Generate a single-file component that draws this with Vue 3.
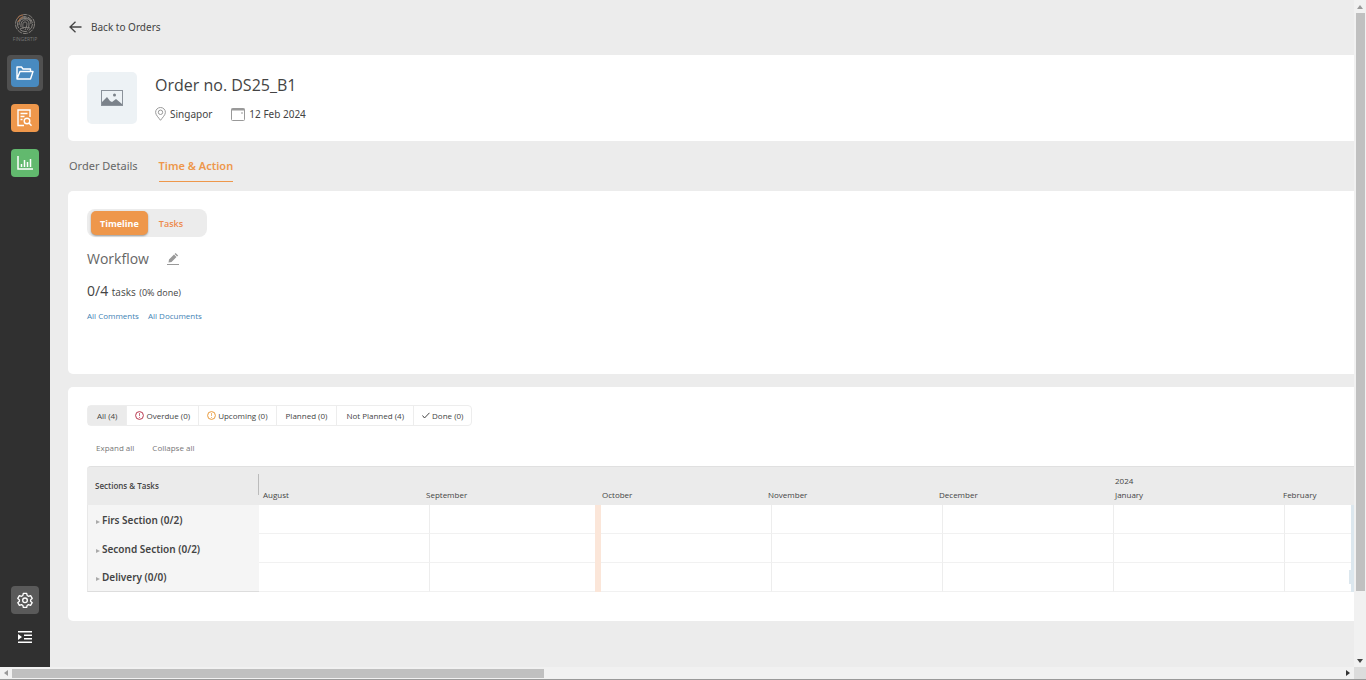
<script setup>
import { ref } from 'vue'

const view = ref('timeline')
const filter = ref('all')

const filters = [
  { id: 'all', label: 'All (4)' },
  { id: 'overdue', label: 'Overdue (0)', icon: 'alert' },
  { id: 'upcoming', label: 'Upcoming (0)', icon: 'alert' },
  { id: 'planned', label: 'Planned (0)' },
  { id: 'unplanned', label: 'Not Planned (4)' },
  { id: 'done', label: 'Done (0)', icon: 'check' },
]

const months = [
  { name: 'August' },
  { name: 'September' },
  { name: 'October' },
  { name: 'November' },
  { name: 'December' },
  { name: 'January', year: '2024' },
  { name: 'February' },
]

const sections = ['Firs Section (0/2)', 'Second Section (0/2)', 'Delivery (0/0)']
</script>

<template>
  <div class="window">
    <div class="app">
      <nav class="sidebar" aria-label="Main">
        <div class="brand">
          <svg width="22" height="22" viewBox="0 0 22 22" fill="none" stroke="#85817d" stroke-width="1">
            <circle cx="11" cy="11" r="9.5" stroke-dasharray="5 1" />
            <circle cx="11" cy="11" r="7.5" stroke-dasharray="8 1.5" />
            <path d="M5 12c0-9 12-8 12-1M7 14c-1-9 8-9 8-3 0 3-1 5-2 6M9 16c0-3-1-7 2-7s2 4 0 8M5 8c4-5 9-4 12 0M6 16c3-2 7-2 10-1" />
            <path d="M3 6c1-2 3-4 6-4M4 9c1-3 3-4 5-5" stroke="#a56a43" />
          </svg>
          <span class="brand-name">FINGERTIP</span>
        </div>
        <a href="#orders" class="nav-item active" aria-label="Orders">
          <span class="tile blue">
            <svg width="18" height="14" viewBox="0 0 18 14" fill="none" stroke="#fff" stroke-width="1.4" stroke-linejoin="round">
              <path d="M1 13V1h4.5l1.5 2h7.500v2.500M1 13L4 5.500h13L14.500 13z" />
            </svg>
          </span>
        </a>
        <a href="#search" class="nav-item" aria-label="Search">
          <span class="tile orange">
            <svg width="16" height="18" viewBox="0 0 16 18" fill="none" stroke="#fff" stroke-width="1.400">
              <path d="M7 16.500H1V1h12v7M3.500 4.500h7M3.500 7.500h4M3.500 10.500h2" />
              <circle cx="10" cy="12" r="2.800" />
              <path d="M12 14l2.500 2.800" />
            </svg>
          </span>
        </a>
        <a href="#reports" class="nav-item" aria-label="Reports">
          <span class="tile green">
            <svg width="16" height="14" viewBox="0 0 16 14" fill="none" stroke="#fff" stroke-width="1.500">
              <path d="M1 0v13h15M4.500 11V8M7.500 11V4M10.500 11V6M13.500 11V3" />
            </svg>
          </span>
        </a>
        <div class="nav-end">
          <a href="#settings" class="nav-item" aria-label="Settings">
            <span class="tile gray">
              <svg width="16" height="16" viewBox="0 0 24 24" fill="none" stroke="#fff" stroke-width="2" stroke-linejoin="round">
                <path d="M9.500 2h5l.7 3.200 2 1.200 3.200-1 2.400 4.200-2.400 2.200v2l2.400 2.200-2.400 4-3.200-1-2 1.200-.7 3h-5l-.7-3-2-1.200-3.200 1-2.400-4 2.400-2.200v-2L1.200 9.600l2.400-4.200 3.200 1 2-1.200z" />
                <circle cx="12" cy="12.500" r="3.500" />
              </svg>
            </span>
          </a>
          <button class="expand" type="button" aria-label="Expand menu">
            <svg width="14" height="12" viewBox="0 0 14 12" fill="#fff">
              <path d="M0 0h14v1.500H0zM6 3.500h8V5H6zM6 7h8v1.500H6zM0 10.500h14V12H0zM0 3l4 3-4 3z" />
            </svg>
          </button>
        </div>
      </nav>

      <main class="content">
        <a href="#orders" class="back">
          <svg width="13" height="12" viewBox="0 0 13 12" fill="none" stroke="#444" stroke-width="1.300">
            <path d="M12.500 6H1M6.500 .7L1 6l5.500 5.300" />
          </svg>
          Back to Orders
        </a>

        <section class="card order">
          <div class="thumb">
            <svg width="22" height="16" viewBox="0 0 22 16">
              <rect x=".5" y=".5" width="21" height="15" fill="none" stroke="#8b929a" />
              <path d="M1 15v-3l5-5 3 4 2 1 4-3 6 5v1z" fill="#7b828a" />
              <circle cx="13.500" cy="5" r="1.500" fill="#7b828a" />
            </svg>
          </div>
          <div class="order-info">
            <h1>Order no. DS25_B1</h1>
            <div class="meta">
              <span class="meta-item">
                <svg width="11" height="14" viewBox="0 0 11 14" fill="none" stroke="#999">
                  <path d="M5.500 13.300C3.500 10.500.6 8 .6 5.300a4.900 4.800 0 0 1 9.800 0C10.400 8 7.500 10.500 5.500 13.300z" />
                  <circle cx="5.500" cy="5.300" r="2.200" />
                </svg>
                Singapor
              </span>
              <span class="meta-item">
                <svg width="14" height="13" viewBox="0 0 14 13" fill="none" stroke="#999">
                  <rect x=".5" y=".5" width="13" height="12" rx="1" />
                  <path d="M.5 1.500h13" stroke-width="2" />
                  <path d="M10 5h2" />
                </svg>
                12 Feb 2024
              </span>
            </div>
          </div>
        </section>

        <nav class="tabs" aria-label="Order">
          <a href="#details" class="tab">Order Details</a>
          <a href="#time" class="tab current">Time &amp; Action</a>
        </nav>

        <section class="card workflow">
          <div class="switch">
            <button type="button" :class="{ on: view === 'timeline' }" @click="view = 'timeline'">Timeline</button>
            <button type="button" :class="{ on: view === 'tasks' }" @click="view = 'tasks'">Tasks</button>
          </div>
          <div class="workflow-head">
            <h2>Workflow</h2>
            <button class="edit" type="button" aria-label="Edit workflow">
              <svg width="12" height="12" viewBox="0 0 12 12" fill="#999">
                <path d="M1.500 9.500L2 6.500l5-5 2.500 2.500-5 5zM7.600 1L8.600 0l2.500 2.500-1 1zM0 11h12v1H0z" />
              </svg>
            </button>
          </div>
          <p class="progress"><strong>0/4</strong> <span>tasks</span> <small>(0% done)</small></p>
          <div class="links">
            <a href="#comments">All Comments</a>
            <a href="#documents">All Documents</a>
          </div>
        </section>

        <section class="card schedule">
          <div class="filters">
            <button
              v-for="f in filters"
              :key="f.id"
              type="button"
              :class="[f.id, { selected: filter === f.id }]"
              @click="filter = f.id"
            >
              <svg v-if="f.icon === 'alert'" width="9" height="9" viewBox="0 0 9 9" fill="none" stroke="currentColor">
                <circle cx="4.500" cy="4.500" r="3.900" />
                <path d="M4.500 2v3M4.500 6v1" stroke-opacity=".7" />
              </svg>
              <svg v-if="f.icon === 'check'" width="8" height="7" viewBox="0 0 8 7" fill="none" stroke="currentColor">
                <path d="M.5 3.500l2 2.500L7.500 .8" />
              </svg>
              <span>{{ f.label }}</span>
            </button>
          </div>

          <div class="tree-actions">
            <button type="button">Expand all</button>
            <button type="button">Collapse all</button>
          </div>

          <div class="gantt">
            <table>
              <colgroup>
                <col class="col-name" />
                <col v-for="n in 6" :key="n" class="col-month" />
                <col />
              </colgroup>
              <thead>
                <tr>
                  <th class="head-name" scope="col">Sections &amp; Tasks</th>
                  <th class="head-months" colspan="7">
                    <div class="months">
                      <span v-for="m in months" :key="m.name" class="month">
                        <span v-if="m.year">{{ m.year }}</span>
                        <span>{{ m.name }}</span>
                      </span>
                    </div>
                  </th>
                </tr>
              </thead>
              <tbody>
                <tr v-for="s in sections" :key="s">
                  <th scope="row">
                    <button type="button" class="row-toggle">
                      <svg width="4" height="4" viewBox="0 0 4 4" fill="#aaa"><path d="M0 0l4 2-4 2z" /></svg>
                      {{ s }}
                    </button>
                  </th>
                  <td v-for="m in months" :key="m.name"></td>
                </tr>
              </tbody>
            </table>
            <div class="marker today"></div>
            <div class="marker due"></div>
            <div class="marker delivery"></div>
          </div>
        </section>
      </main>
    </div>

    <div class="scroll vertical">
      <svg width="6" height="4" viewBox="0 0 6 4" fill="#999"><path d="M0 4l3-4 3 4z" /></svg>
      <div class="track"><div class="bar"></div></div>
      <svg width="6" height="4" viewBox="0 0 6 4" fill="#444"><path d="M0 0l3 4 3-4z" /></svg>
    </div>
    <div class="scroll horizontal">
      <svg width="4" height="6" viewBox="0 0 4 6" fill="#999"><path d="M4 0L0 3l4 3z" /></svg>
      <div class="track"><div class="bar"></div></div>
      <svg width="4" height="6" viewBox="0 0 4 6" fill="#333"><path d="M0 0l4 3-4 3z" /></svg>
    </div>
    <div class="corner"></div>
  </div>
</template>

<style>
body {
  background: #ececec;
  overflow: hidden;
}
</style>

<style scoped>
* {
  box-sizing: border-box;
}
.window {
  display: grid;
  grid-template: minmax(0, 1fr) 13px / minmax(0, 1fr) 12px;
  height: 100vh;
  font-family: "Open Sans", "Noto Sans", sans-serif;
  font-size: 10px;
  color: #444;
}
svg {
  display: block;
  flex: none;
}
a {
  color: inherit;
  text-decoration: none;
}
button {
  font: inherit;
  color: inherit;
  background: none;
  border: 0;
  padding: 0;
}
h1,
h2,
p {
  margin: 0;
  font-weight: 400;
}
.app {
  display: flex;
  background: #ececec;
  overflow: hidden;
}

.sidebar {
  flex: none;
  display: flex;
  flex-direction: column;
  align-items: center;
  gap: 9px;
  width: 50px;
  padding: 13px 0 19px;
  background: #303030;
}
.brand {
  display: flex;
  flex-direction: column;
  align-items: center;
  height: 33px;
}
.brand-name {
  margin-top: 2px;
  font-size: 5px;
  line-height: 5px;
  color: #777;
}
.nav-item {
  display: flex;
  padding: 4px;
  border-radius: 4px;
}
.nav-item.active {
  background: #505050;
}
.tile {
  display: flex;
  align-items: center;
  justify-content: center;
  width: 28px;
  height: 28px;
  border-radius: 4px;
}
.blue { background: #488ac0; }
.orange { background: #ee974b; }
.green { background: #62b96e; }
.gray { background: #5a5a5a; }
.nav-end {
  display: flex;
  flex-direction: column;
  align-items: center;
  gap: 8px;
  margin-top: auto;
}
.expand {
  display: flex;
  padding: 5px;
}

.content {
  flex: 1;
  min-width: 0;
  padding: 19px 0 0 18px;
}
.back,
.meta,
.tabs,
.row-toggle {
  font-family: "Noto Sans", "Open Sans", sans-serif;
}
.back {
  display: flex;
  align-items: center;
  gap: 9px;
  width: fit-content;
  height: 16px;
  padding-left: 1px;
}
.card {
  background: #fff;
  border-radius: 5px 0 0 5px;
  padding-left: 19px;
}
.order {
  display: flex;
  gap: 18px;
  margin-top: 20px;
  padding-top: 17px;
  padding-bottom: 17px;
}
.thumb {
  display: flex;
  align-items: center;
  justify-content: center;
  width: 50px;
  height: 52px;
  border-radius: 5px;
  background: #edf2f5;
}
h1 {
  font-size: 16px;
  line-height: 26px;
}
.meta {
  display: flex;
  gap: 19px;
  margin-top: 8px;
}
.meta-item {
  display: flex;
  align-items: center;
  gap: 4px;
  line-height: 16px;
}
.tabs {
  display: flex;
  gap: 21px;
  height: 41px;
  margin-bottom: 9px;
  padding-left: 1px;
  font-size: 11px;
  color: #666;
}
.tab {
  padding-top: 17px;
  line-height: 16px;
}
.tab.current {
  font-weight: 600;
  color: #ee974b;
  border-bottom: 1px solid #ee974b;
}

.workflow {
  height: 183px;
  padding-top: 18px;
}
.switch {
  display: flex;
  align-items: center;
  width: 120px;
  height: 28px;
  padding: 0 4px;
  border-radius: 8px;
  background: #ececec;
  font-size: 9px;
  font-weight: 600;
  color: #ee8a4b;
}
.switch button {
  height: 24px;
  padding: 0 11px;
}
.switch .on {
  padding: 0 9px;
  border-radius: 5px;
  background: #ee974b;
  color: #fff;
  font-weight: 700;
  box-shadow: 0 1px 2px rgba(0, 0, 0, 0.35);
}
.workflow-head {
  display: flex;
  align-items: center;
  gap: 18px;
  margin-top: 12px;
}
h2 {
  font-size: 14px;
  line-height: 20px;
  color: #666;
}
.progress {
  margin-top: 12px;
  line-height: 20px;
  font-size: 10px;
}
.progress strong {
  font-size: 14px;
  font-weight: 400;
}
.progress span {
  margin: 0 1px;
}
.progress small {
  font-size: 9px;
}
.links {
  display: flex;
  gap: 9px;
  margin-top: 7px;
  font-size: 8px;
  line-height: 12px;
  color: #3f83b5;
}

.schedule {
  margin-top: 13px;
  padding-top: 18px;
  padding-bottom: 29px;
}
.filters {
  display: flex;
  width: fit-content;
  height: 21px;
  border: 1px solid #ededed;
  border-radius: 4px;
  font-size: 8px;
}
.filters button {
  display: flex;
  align-items: center;
  gap: 2px;
  padding: 0 8px;
}
.filters .all,
.filters .planned,
.filters .unplanned {
  padding: 0 9px;
}
.filters button + button {
  border-left: 1px solid #ededed;
}
.filters .selected {
  background: #ebebeb;
}
.overdue svg { color: #b8384f; }
.upcoming svg { color: #e99a3c; }
.tree-actions {
  display: flex;
  gap: 18px;
  padding: 16px 9px 12px;
  font-size: 8px;
  line-height: 12px;
  color: #777;
}
.gantt {
  position: relative;
}
table {
  width: 100%;
  table-layout: fixed;
  border-collapse: separate;
  border-spacing: 0;
}
.col-name { width: 172px; }
.col-month { width: 171px; }
th,
td {
  padding: 0;
  text-align: left;
  font-weight: 400;
}
thead th {
  height: 39px;
  background: #ebebeb;
  border-top: 1px solid #e0e0e0;
  font-size: 8px;
}
thead .head-name {
  padding-left: 8px;
  padding-bottom: 2px;
  border-top-left-radius: 4px;
  font-weight: 600;
}
.months {
  display: grid;
  grid-template-columns: 163px 176px 166px 171px 176px 168px minmax(0, 1fr);
  height: 38px;
  padding: 0 0 4px 4px;
  position: relative;
}
.months::before {
  content: "";
  position: absolute;
  left: -1px;
  top: 7px;
  height: 21px;
  border-left: 1px solid #bbb;
}
.month {
  display: flex;
  flex-direction: column;
  justify-content: flex-end;
  gap: 2px;
  line-height: 12px;
}
tbody th {
  height: 29px;
  padding-left: 8px;
  background: #f5f5f5;
  border-left: 1px solid #e8e8e8;
  font-size: 10px;
}
tbody tr:last-child th {
  border-bottom: 1px solid #ddd;
}
tbody td {
  border-right: 1px solid #ededed;
  border-bottom: 1px solid #f1f1f1;
}
tbody td:last-child {
  border-right: 0;
}
.row-toggle {
  display: flex;
  align-items: center;
  gap: 2px;
  font-weight: 600;
}
.row-toggle svg {
  margin-top: 4px;
}
.marker {
  position: absolute;
  top: 39px;
  bottom: 0;
}
.today {
  left: 508px;
  width: 6px;
  background: #fbe6d9;
}
.due {
  right: 0;
  width: 3px;
  background: #dce7ee;
}
.delivery {
  top: auto;
  right: 3px;
  bottom: 8px;
  width: 2px;
  height: 14px;
  background: #dce7ee;
}

.scroll {
  display: flex;
  align-items: center;
  gap: 4px;
  background: #f1f1f1;
}
.track {
  flex: 1;
  align-self: stretch;
}
.bar {
  background: #c0c0c0;
}
.vertical {
  flex-direction: column;
  padding: 5px 0 4px;
}
.vertical .bar {
  width: 9px;
  height: 90%;
  margin: 0 auto;
}
.horizontal {
  padding: 0 4px;
  border-bottom: 1px solid #999;
}
.horizontal .bar {
  width: 40%;
  height: 9px;
  margin-top: 2px;
}
.corner {
  background: #dcdcdc;
  border-bottom: 1px solid #999;
}
</style>
